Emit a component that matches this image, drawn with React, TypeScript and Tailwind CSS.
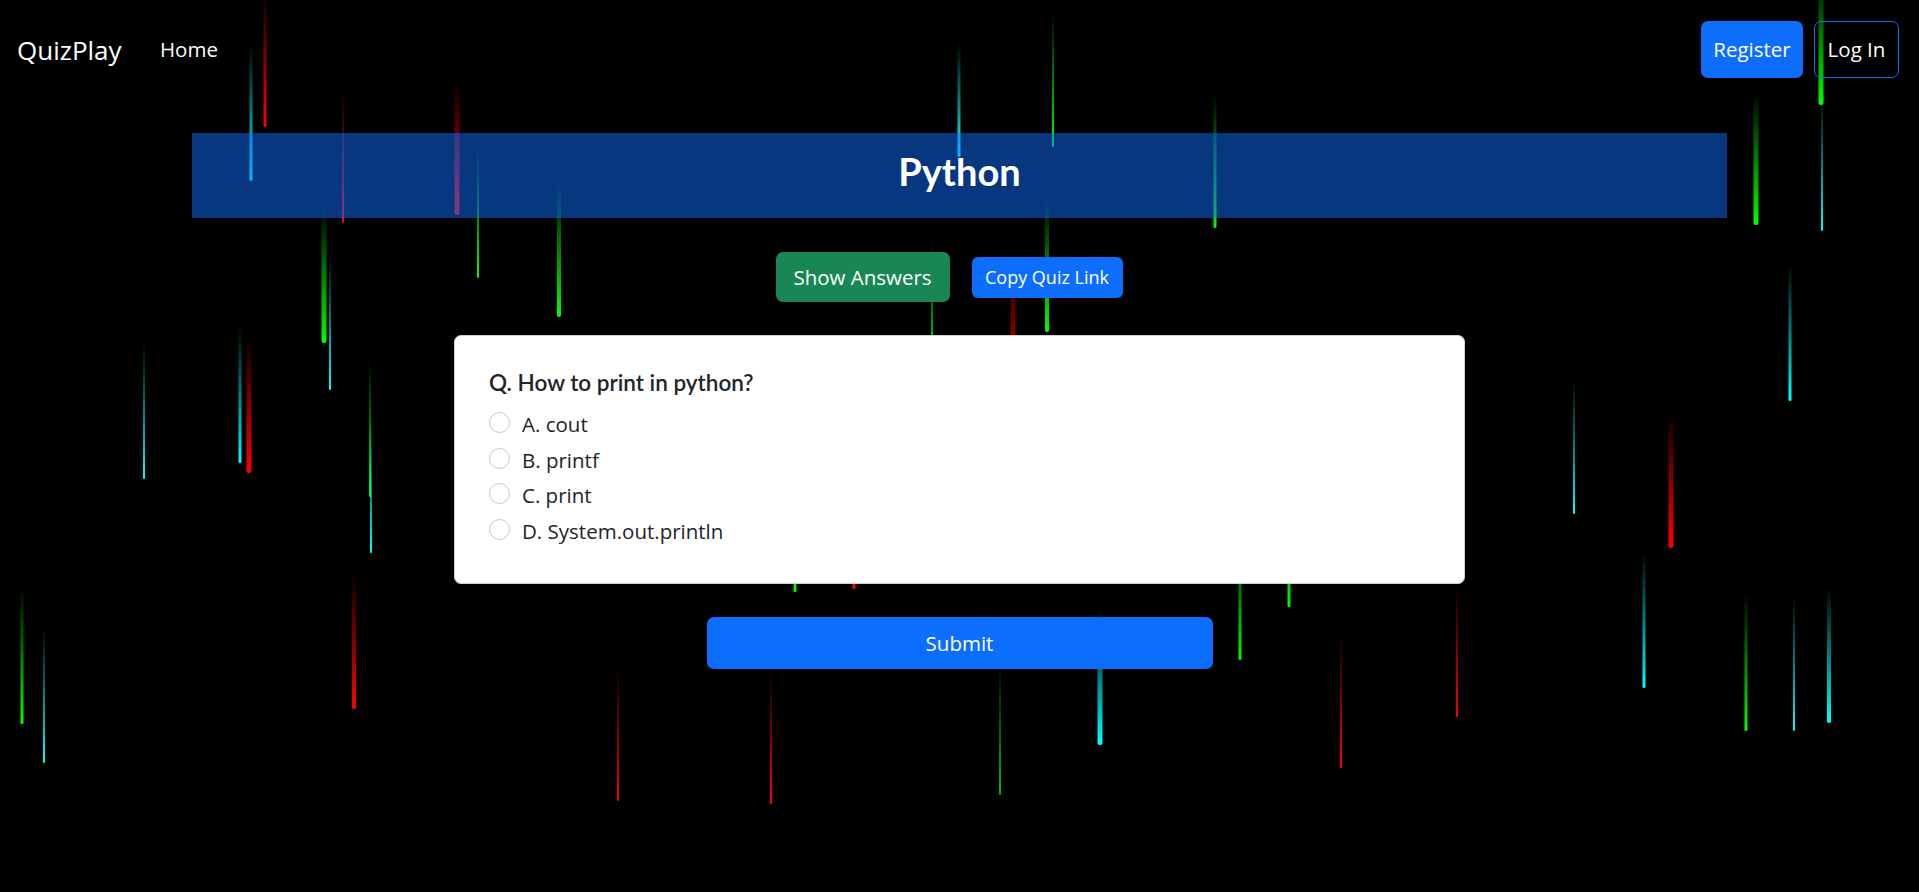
import React from "react";

type Drop = [number, number, number, number, "r" | "g" | "c"];

const drops: Drop[] = [
  [251, 43, 181, 3, "c"],
  [265, -10, 127, 3, "r"],
  [343, 90, 223, 2, "r"],
  [457, 80, 215, 5, "r"],
  [324, 208, 343, 5, "g"],
  [330, 253, 390, 2, "c"],
  [478, 143, 278, 2, "g"],
  [559, 180, 317, 4, "g"],
  [144, 343, 479, 2, "c"],
  [240, 327, 463, 3, "c"],
  [249, 338, 473, 5, "r"],
  [370, 360, 497, 2, "g"],
  [371, 418, 553, 2, "c"],
  [22, 587, 724, 3, "g"],
  [44, 627, 763, 2, "c"],
  [354, 573, 709, 4, "r"],
  [618, 667, 801, 2, "r"],
  [771, 670, 804, 2, "r"],
  [959, 43, 157, 3, "c"],
  [1053, 12, 147, 2, "g"],
  [1047, 197, 332, 4, "g"],
  [932, 240, 375, 2, "g"],
  [1013, 260, 400, 5, "r"],
  [795, 457, 592, 3, "g"],
  [854, 454, 589, 3, "r"],
  [1215, 92, 228, 3, "g"],
  [1240, 525, 660, 3, "g"],
  [1289, 470, 607, 3, "g"],
  [1341, 633, 768, 2, "r"],
  [1457, 583, 717, 2, "r"],
  [1100, 610, 745, 5, "c"],
  [1000, 660, 795, 1.5, "g"],
  [1756, 92, 225, 5, "g"],
  [1821, -30, 105, 5, "g"],
  [1822, 95, 231, 2, "c"],
  [1790, 263, 401, 3, "c"],
  [1574, 379, 514, 2, "c"],
  [1671, 410, 548, 5, "r"],
  [1644, 552, 688, 3, "c"],
  [1746, 593, 731, 3, "g"],
  [1794, 595, 731, 2, "c"],
  [1829, 587, 723, 4, "c"],
];

function Rain() {
  return (
    <svg
      className="absolute left-0 top-0 pointer-events-none"
      width={1919}
      height={892}
      viewBox="0 0 1919 892"
    >
      <defs>
        <linearGradient id="gr" x1="0" y1="0" x2="0" y2="1">
          <stop offset="0" stopColor="#ff0000" stopOpacity="0" />
          <stop offset="1" stopColor="#ff0000" stopOpacity="1" />
        </linearGradient>
        <linearGradient id="gg" x1="0" y1="0" x2="0" y2="1">
          <stop offset="0" stopColor="#00ff00" stopOpacity="0" />
          <stop offset="1" stopColor="#00ff00" stopOpacity="1" />
        </linearGradient>
        <linearGradient id="gc" x1="0" y1="0" x2="0" y2="1">
          <stop offset="0" stopColor="#00ffff" stopOpacity="0" />
          <stop offset="1" stopColor="#00ffff" stopOpacity="1" />
        </linearGradient>
      </defs>
      {drops.map(([x, top, bottom, w, c], i) => (
        <rect
          key={i}
          x={x - w / 2}
          y={top}
          width={w}
          height={bottom - top}
          rx={w / 2}
          fill={`url(#g${c})`}
        />
      ))}
    </svg>
  );
}

const options = ["A. cout", "B. printf", "C. print", "D. System.out.println"];

export default function App() {
  return (
    <div className="relative h-[892px] w-full overflow-hidden bg-black font-['Open_Sans',sans-serif]">
      <Rain />
      <div className="relative">
        <nav className="flex h-[99px] items-center justify-between pl-[17px] pr-[20px]">
          <div className="flex items-center">
            <span className="w-[143px] pt-[2px] text-[26px] text-white">QuizPlay</span>
            <a className="text-[20.5px] text-white">Home</a>
          </div>
          <div className="flex gap-[11px]">
            <button className="h-[57px] w-[102px] rounded-[7px] bg-[#0d6efd] text-[20.5px] text-white">
              Register
            </button>
            <button className="h-[57px] w-[85px] rounded-[7px] border border-[#0d6efd] text-[20.5px] text-white">
              Log In
            </button>
          </div>
        </nav>

        <div className="mx-auto mt-[34px] flex h-[85px] w-[1535px] items-center justify-center bg-[rgba(13,110,253,0.5)] pb-[8px]">
          <h1 className="font-['Lato',sans-serif] text-[38px] font-bold text-white">Python</h1>
        </div>

        <div className="mt-[34px] flex items-center justify-center gap-[22px] pr-[21px]">
          <button className="h-[50px] w-[174px] rounded-[7px] bg-[#198754] text-[20.5px] text-white">
            Show Answers
          </button>
          <button className="h-[41px] w-[151px] rounded-[6px] bg-[#0d6efd] text-[18px] text-white">
            Copy Quiz Link
          </button>
        </div>

        <div className="mx-auto mt-[33px] w-[1011px] rounded-[7px] border border-[#d0d0d0] bg-white pb-[36px] pl-[34px] pt-[33px]">
          <h5 className="font-['Lato',sans-serif] text-[22.5px] font-semibold leading-[27px] text-[#212529]">
            Q. How to print in python?
          </h5>
          <div className="mt-[9px]">
            {options.map((o) => (
              <div key={o} className="flex h-[35.5px] items-center">
                <span className="h-[21px] w-[21px] rounded-full border border-[#c4c4c4] bg-white" />
                <span className="ml-[12px] pt-[4px] text-[20.5px] text-[#212529]">{o}</span>
              </div>
            ))}
          </div>
        </div>

        <button className="mx-auto mt-[33px] block h-[52px] w-[506px] rounded-[7px] bg-[#0d6efd] text-[20.5px] text-white">
          Submit
        </button>
      </div>
    </div>
  );
}
